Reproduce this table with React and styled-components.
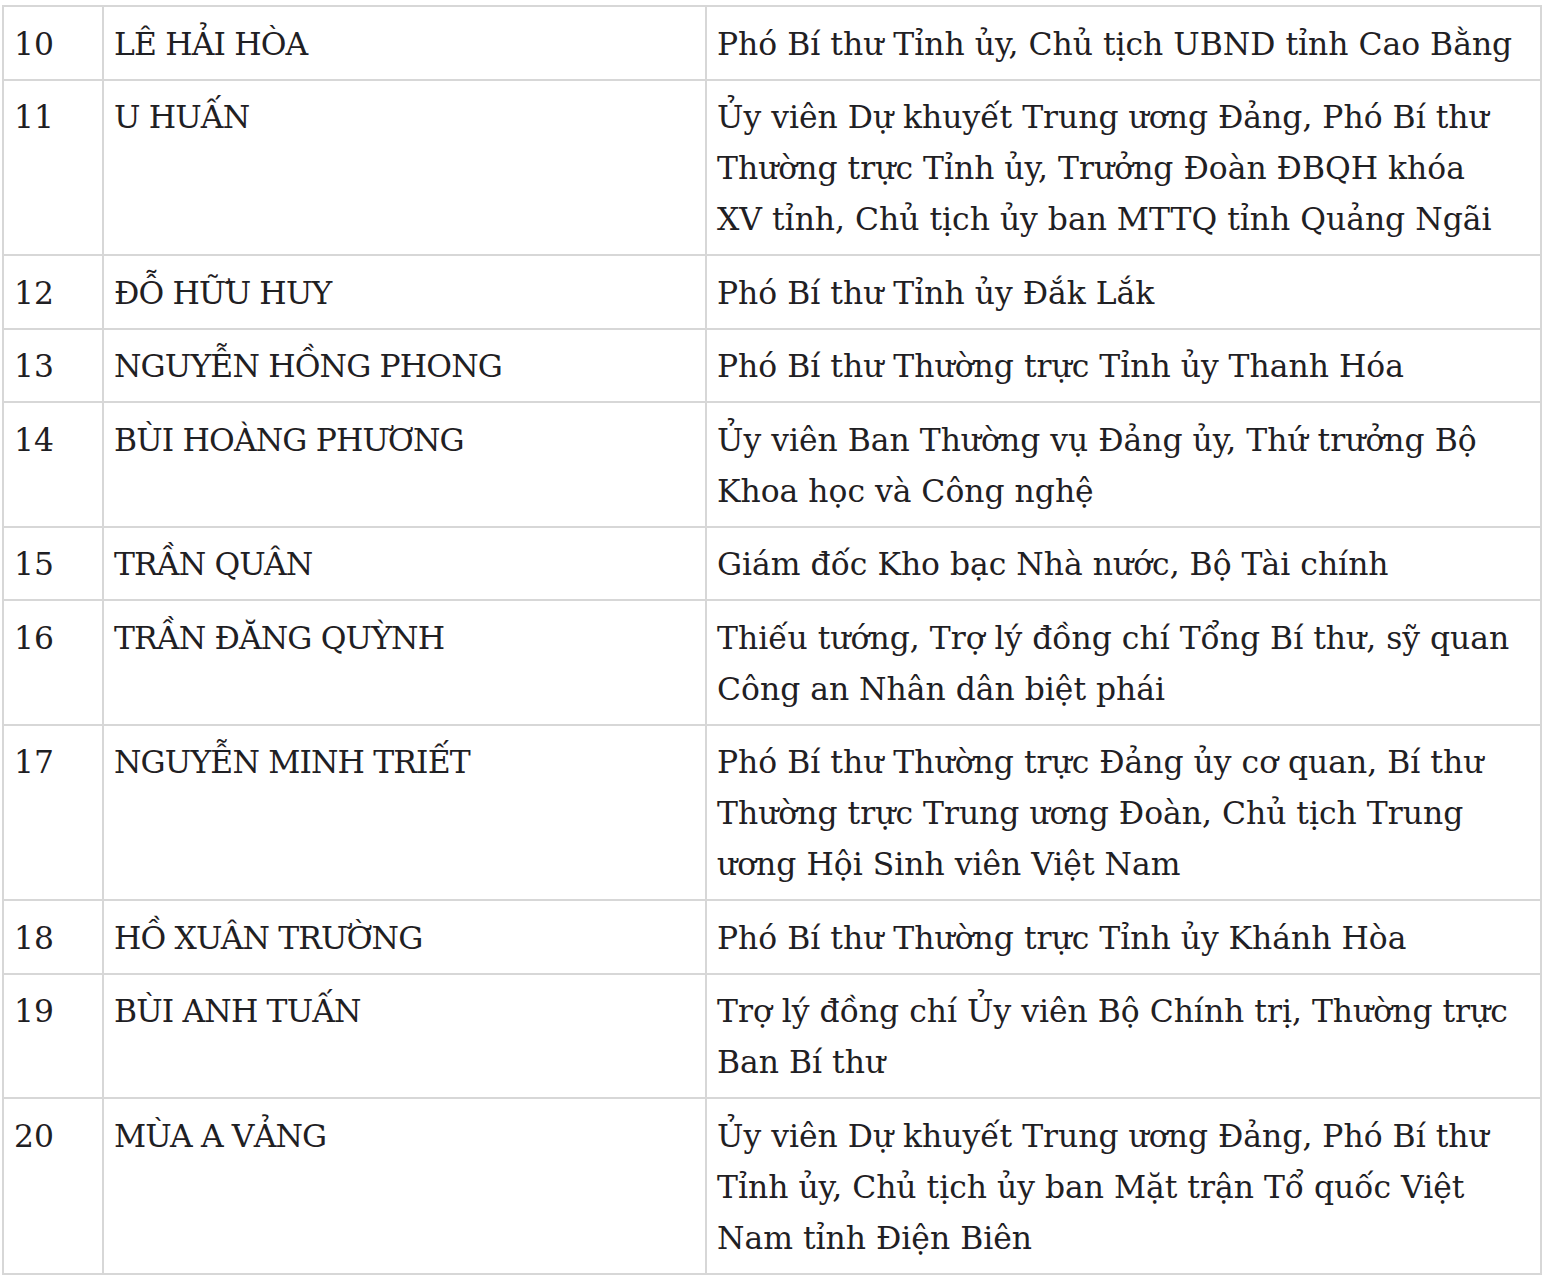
import React from 'react';
import styled, { createGlobalStyle } from 'styled-components';

const GlobalStyle = createGlobalStyle`
  html, body {
    margin: 0;
    padding: 0;
    background: #ffffff;
  }
`;

const rows = [
    { no: '10', name: 'LÊ HẢI HÒA', role: ['Phó Bí thư Tỉnh ủy, Chủ tịch UBND tỉnh Cao Bằng'] },
    { no: '11', name: 'U HUẤN', role: ['Ủy viên Dự khuyết Trung ương Đảng, Phó Bí thư', 'Thường trực Tỉnh ủy, Trưởng Đoàn ĐBQH khóa', 'XV tỉnh, Chủ tịch ủy ban MTTQ tỉnh Quảng Ngãi'] },
    { no: '12', name: 'ĐỖ HỮU HUY', role: ['Phó Bí thư Tỉnh ủy Đắk Lắk'] },
    { no: '13', name: 'NGUYỄN HỒNG PHONG', role: ['Phó Bí thư Thường trực Tỉnh ủy Thanh Hóa'] },
    { no: '14', name: 'BÙI HOÀNG PHƯƠNG', role: ['Ủy viên Ban Thường vụ Đảng ủy, Thứ trưởng Bộ', 'Khoa học và Công nghệ'] },
    { no: '15', name: 'TRẦN QUÂN', role: ['Giám đốc Kho bạc Nhà nước, Bộ Tài chính'] },
    { no: '16', name: 'TRẦN ĐĂNG QUỲNH', role: ['Thiếu tướng, Trợ lý đồng chí Tổng Bí thư, sỹ quan', 'Công an Nhân dân biệt phái'] },
    { no: '17', name: 'NGUYỄN MINH TRIẾT', role: ['Phó Bí thư Thường trực Đảng ủy cơ quan, Bí thư', 'Thường trực Trung ương Đoàn, Chủ tịch Trung', 'ương Hội Sinh viên Việt Nam'] },
    { no: '18', name: 'HỒ XUÂN TRƯỜNG', role: ['Phó Bí thư Thường trực Tỉnh ủy Khánh Hòa'] },
    { no: '19', name: 'BÙI ANH TUẤN', role: ['Trợ lý đồng chí Ủy viên Bộ Chính trị, Thường trực', 'Ban Bí thư'] },
    { no: '20', name: 'MÙA A VẢNG', role: ['Ủy viên Dự khuyết Trung ương Đảng, Phó Bí thư', 'Tỉnh ủy, Chủ tịch ủy ban Mặt trận Tổ quốc Việt', 'Nam tỉnh Điện Biên'] },
];

function App() {
    return (
        <Page>
            <GlobalStyle />
            <Table>
                <colgroup>
                    <col style={{ width: 100 }} />
                    <col style={{ width: 603 }} />
                    <col />
                </colgroup>
                <tbody>
                    {rows.map((r) => (
                        <tr key={r.no}>
                            <Cell>{r.no}</Cell>
                            <Cell tight>{r.name}</Cell>
                            <Cell>
                                {r.role.map((line, i) => (
                                    <Line key={i}>{line}</Line>
                                ))}
                            </Cell>
                        </tr>
                    ))}
                </tbody>
            </Table>
        </Page>
    );
}

const Page = styled.div`
  padding: 5px 0 0 2px;
`;

const Table = styled.table`
  width: 1540px;
  border-collapse: collapse;
  table-layout: fixed;
  font-family: "DejaVu Serif", "Liberation Serif", serif;
  font-size: 31.4px;
  line-height: 51px;
  color: #1f2023;
`;

const Cell = styled.td.withConfig({ shouldForwardProp: (p) => p !== 'tight' })`
  border: 2px solid #d7d7d7;
  padding: 11.5px 12px 9px 10px;
  vertical-align: top;
  letter-spacing: ${(p) => (p.tight ? '-0.85px' : '0')};
`;

const Line = styled.span`
  display: block;
  white-space: nowrap;
`;

export default App;
